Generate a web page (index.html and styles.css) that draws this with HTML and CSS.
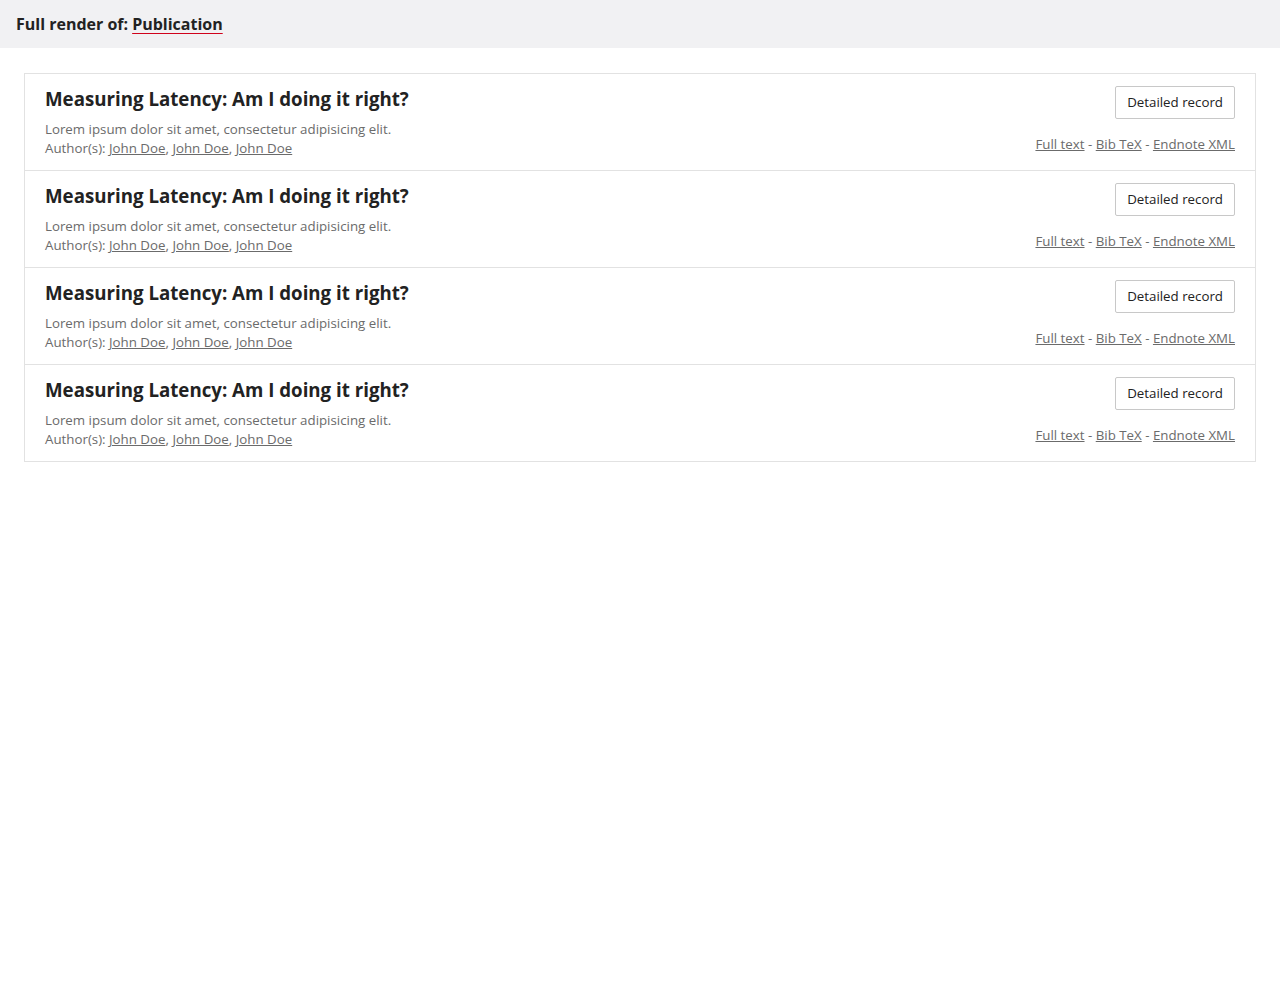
FILE: index.html
```html
<!DOCTYPE html>
<html lang="en">
<head>
<meta charset="utf-8">
<title>Full render of: Publication</title>
<link rel="stylesheet" href="styles.css">
</head>
<body>
<header class="topbar">
  <span class="topbar-label">Full render of:</span> <a class="topbar-link" href="#">Publication</a>
</header>
<main class="page">
  <ul class="pub-list">
    <li class="pub">
      <div class="pub-main">
        <h2 class="pub-title">Measuring Latency: Am I doing it right?</h2>
        <p class="pub-desc">Lorem ipsum dolor sit amet, consectetur adipisicing elit.</p>
        <p class="pub-authors">Author(s): <a href="#">John Doe</a>, <a href="#">John Doe</a>, <a href="#">John Doe</a></p>
      </div>
      <div class="pub-side">
        <a class="btn" href="#">Detailed record</a>
        <p class="pub-links"><a href="#">Full text</a> - <a href="#">Bib TeX</a> - <a href="#">Endnote XML</a></p>
      </div>
    </li>
    <li class="pub">
      <div class="pub-main">
        <h2 class="pub-title">Measuring Latency: Am I doing it right?</h2>
        <p class="pub-desc">Lorem ipsum dolor sit amet, consectetur adipisicing elit.</p>
        <p class="pub-authors">Author(s): <a href="#">John Doe</a>, <a href="#">John Doe</a>, <a href="#">John Doe</a></p>
      </div>
      <div class="pub-side">
        <a class="btn" href="#">Detailed record</a>
        <p class="pub-links"><a href="#">Full text</a> - <a href="#">Bib TeX</a> - <a href="#">Endnote XML</a></p>
      </div>
    </li>
    <li class="pub">
      <div class="pub-main">
        <h2 class="pub-title">Measuring Latency: Am I doing it right?</h2>
        <p class="pub-desc">Lorem ipsum dolor sit amet, consectetur adipisicing elit.</p>
        <p class="pub-authors">Author(s): <a href="#">John Doe</a>, <a href="#">John Doe</a>, <a href="#">John Doe</a></p>
      </div>
      <div class="pub-side">
        <a class="btn" href="#">Detailed record</a>
        <p class="pub-links"><a href="#">Full text</a> - <a href="#">Bib TeX</a> - <a href="#">Endnote XML</a></p>
      </div>
    </li>
    <li class="pub">
      <div class="pub-main">
        <h2 class="pub-title">Measuring Latency: Am I doing it right?</h2>
        <p class="pub-desc">Lorem ipsum dolor sit amet, consectetur adipisicing elit.</p>
        <p class="pub-authors">Author(s): <a href="#">John Doe</a>, <a href="#">John Doe</a>, <a href="#">John Doe</a></p>
      </div>
      <div class="pub-side">
        <a class="btn" href="#">Detailed record</a>
        <p class="pub-links"><a href="#">Full text</a> - <a href="#">Bib TeX</a> - <a href="#">Endnote XML</a></p>
      </div>
    </li>
  </ul>
</main>
</body>
</html>
```

FILE: styles.css
```css
* { box-sizing: border-box; }
html, body { margin: 0; padding: 0; background: #fff; }
body {
  font-family: "Open Sans", "Noto Sans", sans-serif;
  color: #222;
}
.topbar {
  height: 48px;
  background: #f1f1f3;
  padding: 0 16px;
  display: flex;
  align-items: center;
  gap: 4px;
  font-size: 16px;
  font-weight: 700;
  color: #222;
}
.topbar-link {
  color: #222;
  text-decoration: underline;
  text-decoration-color: #d0021b;
  text-underline-offset: 3px;
}
.page { padding: 25px 24px; }
.pub-list {
  list-style: none;
  margin: 0;
  padding: 0;
  border: 1px solid #e2e2e2;
}
.pub {
  display: flex;
  justify-content: space-between;
  padding: 11px 20px 12px 20px;
  height: 97px;
  border-top: 1px solid #e2e2e2;
}
.pub:first-child { border-top: none; height: 96px; }
.pub-title {
  margin: 0;
  font-size: 18.7px;
  line-height: 27px;
  font-weight: 700;
  color: #222;
}
.pub-desc, .pub-authors {
  margin: 0;
  font-size: 13.3px;
  line-height: 19px;
  color: #6b6b6b;
}
.pub-desc { margin-top: 8px; }
.pub-main a, .pub-links a { color: #6b6b6b; text-decoration: underline; }
.pub-side {
  display: flex;
  flex-direction: column;
  align-items: flex-end;
  padding-top: 1px;
}
.btn {
  display: inline-block;
  height: 33px;
  padding: 0 11px;
  line-height: 31px;
  font-size: 13.3px;
  color: #222;
  text-decoration: none;
  border: 1px solid #c8c8c8;
  border-radius: 2px;
  background: #fff;
}
.pub-links {
  margin: 16px 0 0;
  font-size: 13.3px;
  line-height: 19px;
  color: #6b6b6b;
}
```
